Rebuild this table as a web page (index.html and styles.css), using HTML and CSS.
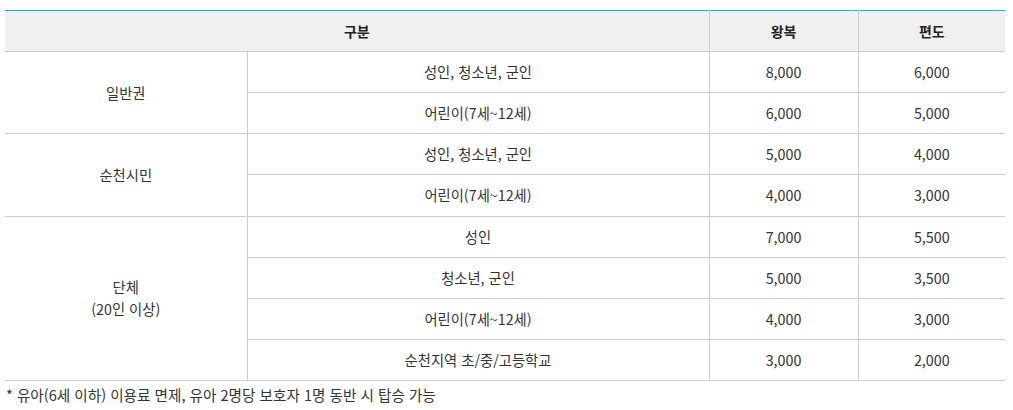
FILE: index.html
```html
<!DOCTYPE html>
<html lang="ko">
<head>
<meta charset="utf-8">
<link rel="stylesheet" href="styles.css">
</head>
<body>
<div class="wrap">
  <table class="fare">
    <colgroup>
      <col class="c1"><col class="c2"><col class="c3"><col class="c4">
    </colgroup>
    <thead>
      <tr><th colspan="2">구분</th><th>왕복</th><th>편도</th></tr>
    </thead>
    <tbody>
      <tr><td rowspan="2" class="first">일반권</td><td>성인, 청소년, 군인</td><td>8,000</td><td>6,000</td></tr>
      <tr><td>어린이(7세~12세)</td><td>6,000</td><td>5,000</td></tr>
      <tr><td rowspan="2" class="first">순천시민</td><td>성인, 청소년, 군인</td><td>5,000</td><td>4,000</td></tr>
      <tr><td>어린이(7세~12세)</td><td>4,000</td><td>3,000</td></tr>
      <tr><td rowspan="4" class="first">단체<br>(20인 이상)</td><td>성인</td><td>7,000</td><td>5,500</td></tr>
      <tr><td>청소년, 군인</td><td>5,000</td><td>3,500</td></tr>
      <tr><td>어린이(7세~12세)</td><td>4,000</td><td>3,000</td></tr>
      <tr><td>순천지역 초/중/고등학교</td><td>3,000</td><td>2,000</td></tr>
    </tbody>
  </table>
  <p class="note">* 유아(6세 이하) 이용료 면제, 유아 2명당 보호자 1명 동반 시 탑승 가능</p>
</div>
</body>
</html>
```
FILE: styles.css
```css
html, body { margin: 0; padding: 0; background: #fff; }
body {
  font-family: "Noto Sans CJK KR", "Noto Sans", sans-serif;
  font-size: 14px;
  color: #333;
}
.wrap { padding: 10px 8px 0 5px; }
.fare {
  width: 1000px;
  border-collapse: collapse;
  table-layout: fixed;
  border-top: 1px solid #00bce8;
}
.c1 { width: 242px; }
.c2 { width: 462px; }
.c3 { width: 149px; }
.c4 { width: 147px; }
.fare th, .fare td {
  text-align: center;
  vertical-align: middle;
  padding: 0;
  border-bottom: 1px solid #cccccc;
  border-left: 1px solid #cccccc;
  line-height: 22px;
}
.fare th {
  height: 40px;
  background: #f0f0f0;
  font-weight: bold;
  color: #222;
}
.fare td { height: 40.125px; font-size: 14.3px; }
.fare th:first-child, .fare td.first { border-left: none; }
.note {
  margin: 4px 0 0 1px;
  line-height: 20px;
  font-size: 14.6px;
  color: #333;
}
```
